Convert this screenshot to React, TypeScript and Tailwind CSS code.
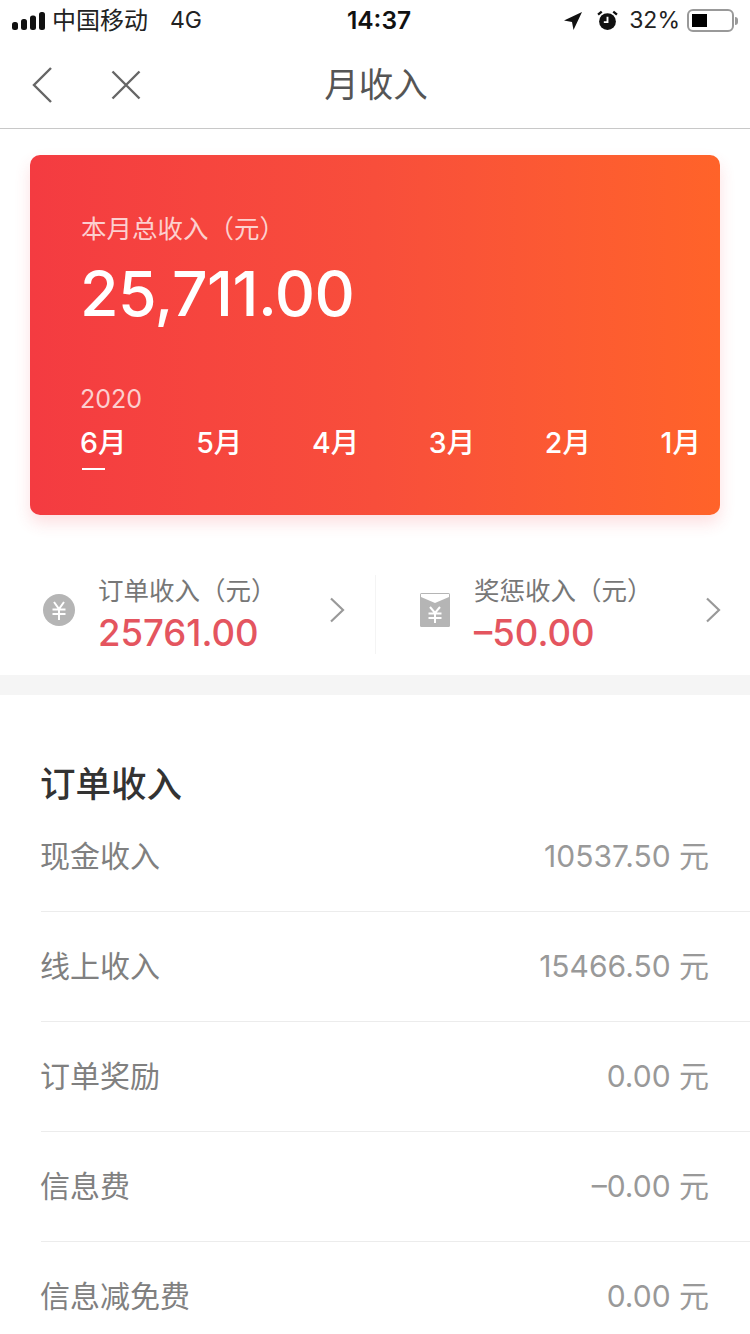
import React from 'react';

const months = ['6月', '5月', '4月', '3月', '2月', '1月'];

const rows = [
  { label: '现金收入', value: '10537.50 元' },
  { label: '线上收入', value: '15466.50 元' },
  { label: '订单奖励', value: '0.00 元' },
  { label: '信息费', value: '–0.00 元' },
  { label: '信息减免费', value: '0.00 元' },
];

function StatusBar() {
  return (
    <div className="h-[41px] flex items-center justify-between pl-3 pr-[12px] text-[#222]">
      <div className="flex items-center w-[264px]">
        <svg width="34" height="18" viewBox="0 0 34 18" fill="#111">
          <rect x="0" y="10" width="6" height="8" rx="2.5" />
          <rect x="9" y="7" width="6" height="11" rx="2.5" />
          <rect x="18" y="3.5" width="6" height="14.5" rx="2.5" />
          <rect x="27" y="0" width="6" height="18" rx="2.5" />
        </svg>
        <span className="ml-[6px] w-[96px] text-[24px] whitespace-nowrap">中国移动</span>
        <span className="ml-[22px] text-[23px]">4G</span>
      </div>
      <span className="font-semibold text-[24.5px] text-[#111]">14:37</span>
      <div className="flex items-center justify-end w-[256px]">
        <svg width="18" height="18" viewBox="0 0 18 18" fill="#111">
          <path d="M18 0 0 8.5l8 1.5 1.5 8z" />
        </svg>
        <svg className="ml-[15px]" width="21" height="21" viewBox="0 0 20 20">
          <circle cx="10" cy="11" r="8" fill="#111" />
          <path d="M10 6.5v5H6.5" stroke="#fff" strokeWidth="1.8" fill="none" />
          <path d="M1 4.5 4.5 1.5M19 4.5 15.5 1.5" stroke="#111" strokeWidth="2.2" />
        </svg>
        <span className="ml-[11px] text-[23px] text-[#222]">32%</span>
        <div className="ml-[7px] w-[47px] h-[23px] rounded-[6px] border-2 border-[#999] p-[3px]">
          <div className="w-[15px] h-full bg-black" />
        </div>
        <div className="ml-[1px] w-[3px] h-[8px] bg-[#999] rounded-r-sm" />
      </div>
    </div>
  );
}

function NavBar() {
  return (
    <div className="h-[88px] border-b border-[#c8c8c8] flex items-center pl-[32px] relative">
      <svg width="20" height="36" viewBox="0 0 20 36" fill="none" stroke="#666" strokeWidth="2.4">
        <path d="M19 1 2 18l17 17" />
      </svg>
      <svg className="ml-[59px]" width="30" height="30" viewBox="0 0 30 30" fill="none" stroke="#666" strokeWidth="2.4">
        <path d="M1.5 1.5l27 27M28.5 1.5l-27 27" />
      </svg>
      <span className="absolute left-[2px] right-0 text-center text-[34.5px] text-[#555]">月收入</span>
    </div>
  );
}

function SummaryCard() {
  return (
    <div className="mx-[30px] mt-[26px] h-[360px] rounded-[10px] bg-gradient-to-r from-[#f43b41] via-[#f84e3b] to-[#ff6329] shadow-[0_8px_16px_rgba(244,58,68,0.16)] pt-[58px] pl-[50px] pr-[19px] text-white">
      <div className="ml-[1px] text-[25.5px] leading-[32px] text-white/75 [text-spacing-trim:space-all]">本月总收入（元）</div>
      <div className="mt-[12px] text-[62.5px] leading-[72px] font-medium tracking-[-0.5px]">25,711.00</div>
      <div className="mt-[55px] text-[25px] leading-[30px] text-white/75">2020</div>
      <div className="mt-[11px] flex justify-between">
        {months.map((m, i) => (
          <div key={m} className="flex flex-col items-start">
            <span className="text-[28.5px] leading-[36px] font-medium">{m}</span>
            {i === 0 && <div className="mt-[7px] ml-[2px] w-[23px] h-[2px] bg-white" />}
          </div>
        ))}
      </div>
    </div>
  );
}

function Stat({ icon, label, value, className }: { icon: React.ReactNode; label: string; value: string; className: string }) {
  return (
    <div className={`flex-1 flex items-center h-[79px] ${className}`}>
      <div className="w-[32px] mb-[9px] flex justify-center">{icon}</div>
      <div className="ml-[23px] flex-1">
        <div className="text-[25.5px] leading-[32px] text-[#777] whitespace-nowrap [text-spacing-trim:space-all]">{label}</div>
        <div className="mt-[5px] text-[36.5px] leading-[42px] font-medium text-[#e4555f]">{value}</div>
      </div>
      <svg className="mb-[9px]" width="16" height="26" viewBox="0 0 16 26" fill="none" stroke="#999" strokeWidth="2.2">
        <path d="M2 1.5 14 13 2 24.5" />
      </svg>
    </div>
  );
}

export default function App() {
  return (
    <div className="w-[750px] h-[1334px] overflow-hidden bg-white font-['Inter','Noto_Sans_CJK_SC',sans-serif]">
      <StatusBar />
      <NavBar />
      <SummaryCard />
      <div className="mt-[60px] flex">
        <Stat
          className="pl-[43px] pr-[30px] border-r border-[#f4f4f4]"
          label="订单收入（元）"
          value="25761.00"
          icon={
            <svg width="32" height="32" viewBox="0 0 32 32">
              <circle cx="16" cy="16" r="16" fill="#b5b5b5" />
              <path d="M11 8l5 7 5-7M9.5 15.5h13M9.5 20h13M16 15v11" stroke="#fff" strokeWidth="2" fill="none" />
            </svg>
          }
        />
        <Stat
          className="pl-[43px] pr-[29px]"
          label="奖惩收入（元）"
          value="–50.00"
          icon={
            <svg width="30" height="34" viewBox="0 0 30 34">
              <rect width="30" height="34" rx="1.5" fill="#b5b5b5" />
              <path d="M1 1h28v3L15 10 1 4z" fill="#fff" />
              <path d="M10 14l5 6 5-6M8.5 20.5h13M8.5 25h13M15 20v10" stroke="#fff" strokeWidth="2" fill="none" />
            </svg>
          }
        />
      </div>
      <div className="mt-[21px] h-[20px] bg-[#f5f5f5]" />
      <div className="pl-[41px] pt-[68px]">
        <div className="-ml-px text-[35.5px] leading-[44px] font-medium text-[#333]">订单收入</div>
        <div className="mt-[-5px]">
          {rows.map((r, i) => (
            <div
              key={r.label}
              className={`h-[110px] pb-[2px] flex items-center justify-between pr-[41px] ${i < rows.length - 1 ? 'border-b border-[#ececec]' : ''}`}
            >
              <span className="-ml-px text-[30px] leading-[44px] text-[#808080]">{r.label}</span>
              <span className="text-[30px] leading-[44px] text-[#999]">{r.value}</span>
            </div>
          ))}
        </div>
      </div>
    </div>
  );
}
